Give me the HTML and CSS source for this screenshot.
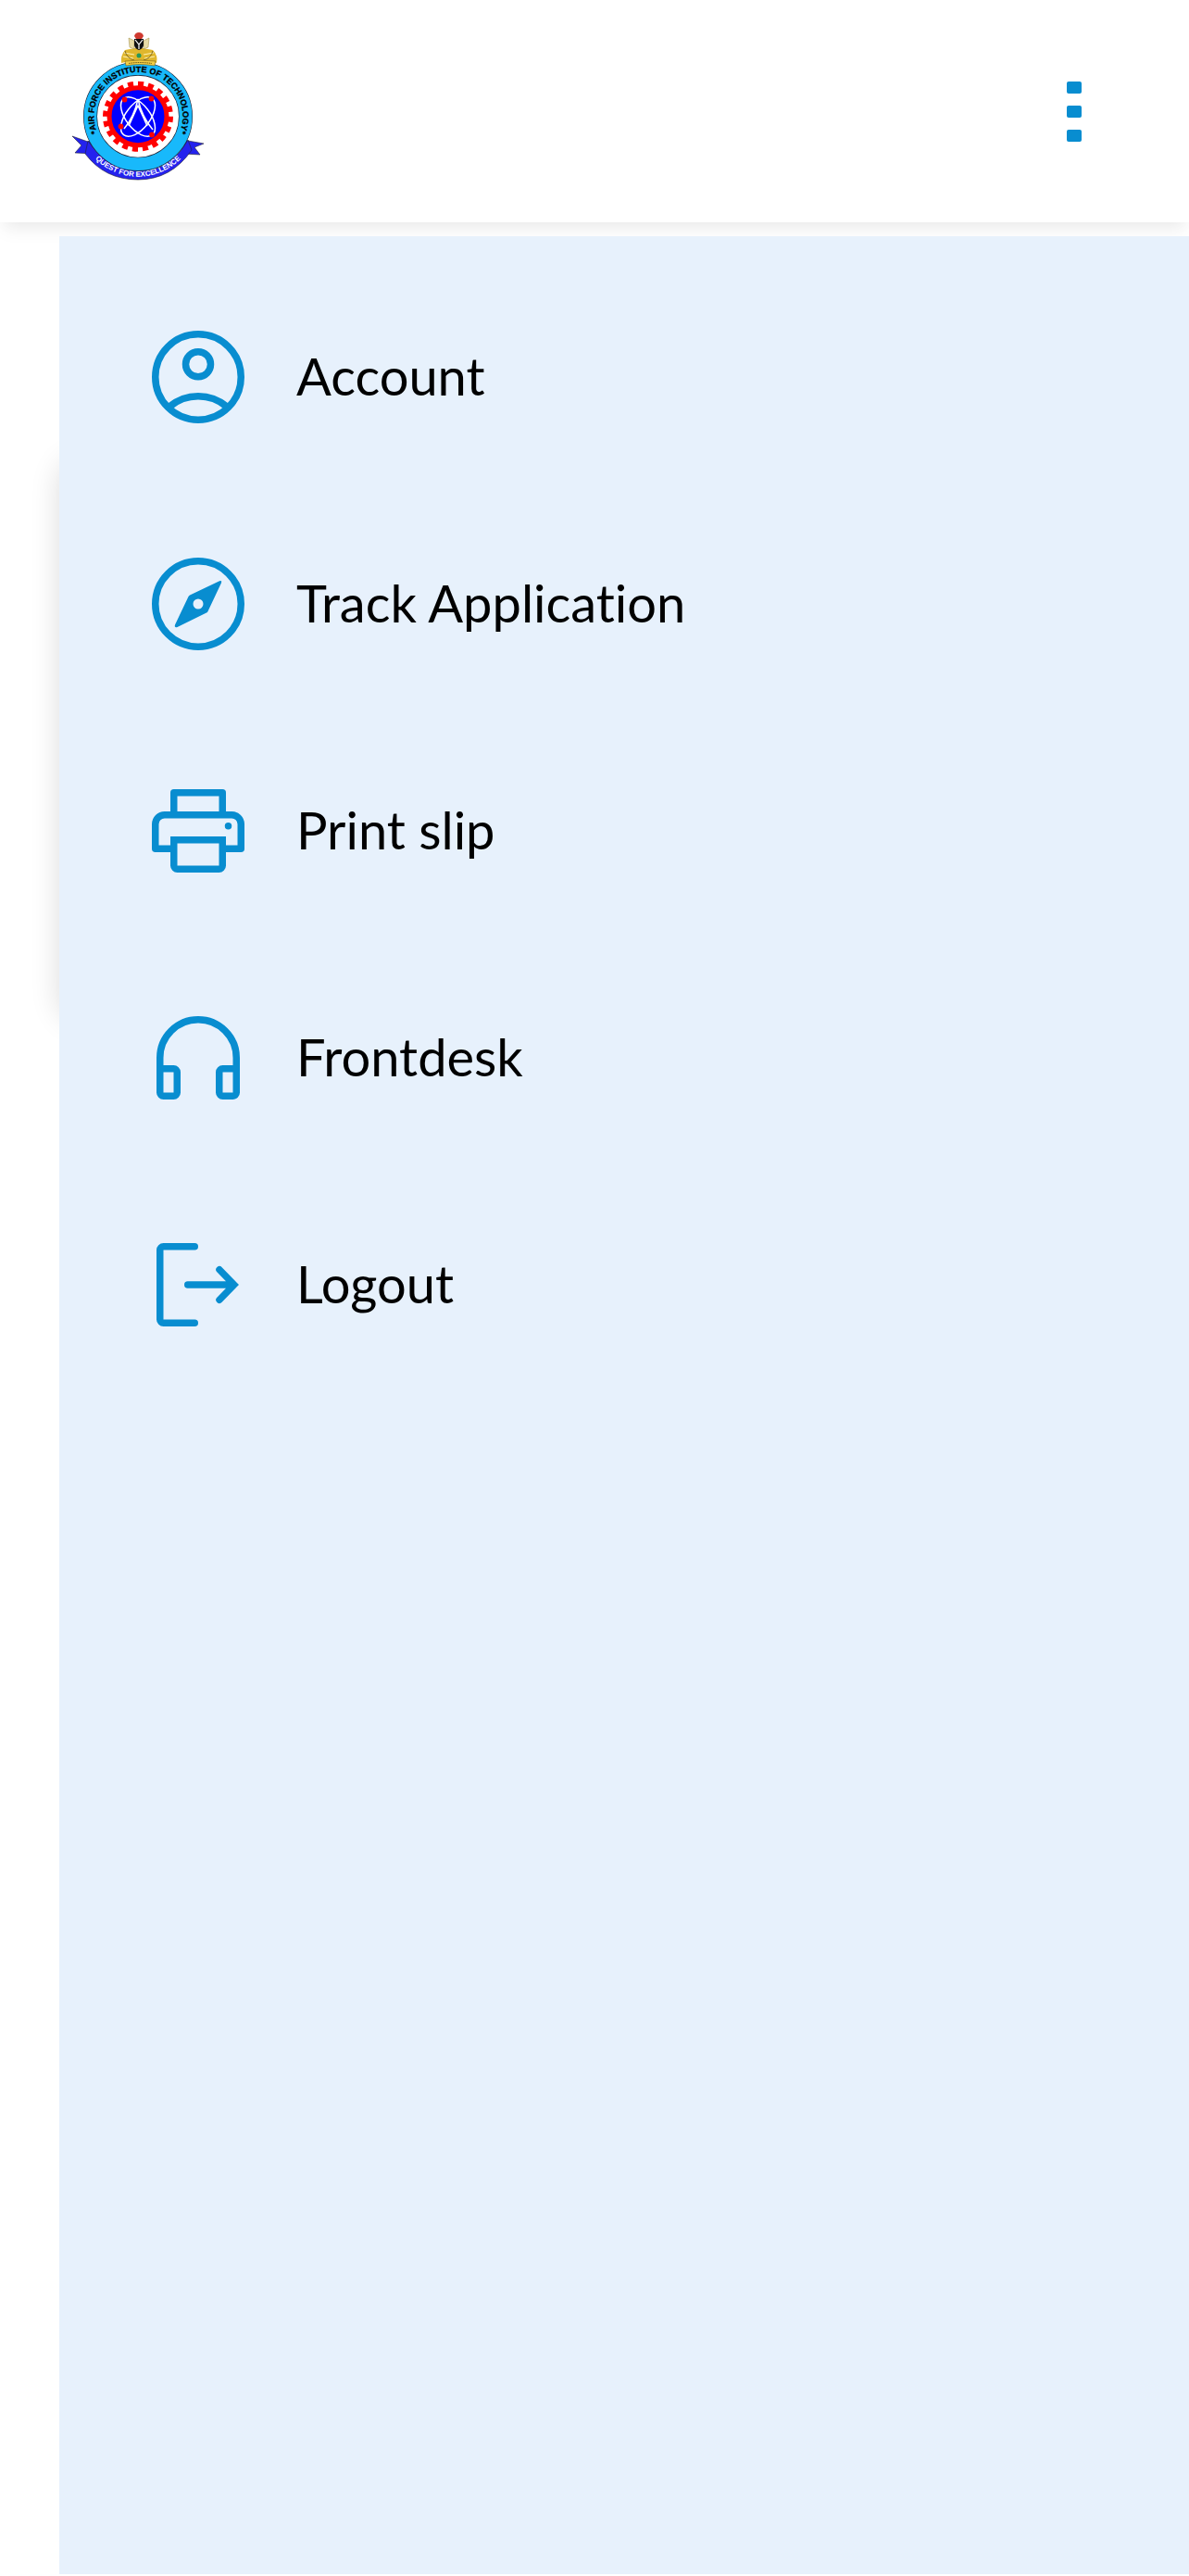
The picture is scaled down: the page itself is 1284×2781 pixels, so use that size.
FILE: index.html
```
<!DOCTYPE html>
<html lang="en">
<head>
  <meta charset="utf-8">
  <meta name="viewport" content="width=device-width, initial-scale=1">
  <title>Air Force Institute of Technology</title>
  <link rel="stylesheet" href="styles.css">
</head>
<body>
  <header class="topbar">
    <a class="brand" href="#" aria-label="Home">
      <svg class="crest" viewBox="0 0 160 180" aria-hidden="true">
        <defs>
          <path id="ring-path" d="M79 143.700a48 48 0 1 1 1 0"/>
          <path id="motto-path" d="M14 95.700a65 65 0 0 0 130 0"/>
        </defs>
        <path d="M8 117l17 6 15-3-8 16-21-1 7-8zM150 125l-17-3-13-2 9 16 17 1-6-8z" fill="#2422ee" stroke="#223" stroke-width=".6"/>
        <path d="M25 122Q45 152 79 154T133 121L137 132Q115 164 79 164T22 136z" fill="#2422ee" stroke="#223" stroke-width=".6"/>
        <circle cx="79" cy="95.700" r="51.500" fill="#fff" stroke="#223" stroke-width="15"/>
        <circle cx="79" cy="95.700" r="51.500" fill="none" stroke="#18b9fb" stroke-width="13.800"/>
        <circle cx="79" cy="95.700" r="35" fill="none" stroke="#f00" stroke-width="6" pathLength="200" stroke-dasharray="5.500 4.500"/>
        <circle cx="79" cy="95.700" r="31" fill="#00f" stroke="#f00" stroke-width="5"/>
        <g fill="none" stroke="#fff" stroke-width="1.500">
          <ellipse cx="79" cy="96" rx="13" ry="25" transform="rotate(38 79 96)"/>
          <ellipse cx="79" cy="96" rx="13" ry="25" transform="rotate(-38 79 96)"/>
          <path d="M64 109Q75 96 79 77Q83 96 95 110M69 106L79 84L89 106"/>
        </g>
        <g fill="#f00"><circle cx="64.500" cy="77.500" r="2.900"/><circle cx="93.500" cy="76.500" r="2.900"/><circle cx="60.500" cy="106.500" r="2.900"/><circle cx="94" cy="115.500" r="2.900"/></g>
        <text class="ring-text"><textPath href="#ring-path" startOffset="50%" text-anchor="middle">*AIR FORCE INSTITUTE OF TECHNOLOGY*</textPath></text>
        <text class="motto-text"><textPath href="#motto-path" startOffset="50%" text-anchor="middle">QUEST FOR EXCELLENCE</textPath></text>
        <g>
          <path d="M61 38Q60 30 65 24L76 22H84L95 24Q101 30 99 38L90 36H70z" fill="#e0b72d"/>
          <path d="M64 27l11 2M63 31l11 2M96 27l-11 2M97 31l-11 2" fill="none" stroke="#fff3b5" stroke-width="1"/>
          <path d="M65 25q2 8 10 10M95 25q-2 8-10 10" fill="none" stroke="#6b5618" stroke-width=".8"/>
          <path d="M69 11l6 3v9l-5-2zM91 11l-6 3v9l5-2z" fill="#e8dca8" stroke="#998338" stroke-width=".5"/>
          <path d="M75 12h10v7q-1 4-5 5q-4-1-5-5z" fill="#111"/>
          <path d="M76 13l4 5 4-5M80 18v5" fill="none" stroke="#fff" stroke-width="1.200"/>
          <path d="M75 9q1-4 5-4t5 4l-2 3h-6z" fill="#cf3930"/>
          <circle cx="80" cy="30" r="2.500" fill="#26975b"/>
          <path d="M65 36Q80 34 98 36L97 41Q80 38 66 41z" fill="#f3ce45" stroke="#604d15" stroke-width=".5"/>
          <path d="M69 38.500Q80 36.500 94 38.500" fill="none" stroke="#4b3b10" stroke-dasharray="1 .7"/>
        </g>
      </svg>
    </a>
    <button class="menu-toggle" type="button" aria-label="Menu" aria-expanded="true">
      <span class="dot"></span><span class="dot"></span><span class="dot"></span>
    </button>
  </header>

  <main class="page">
    <section class="card"></section>
    <nav class="drawer">
      <a class="item" href="#">
        <svg class="icon" viewBox="0 0 24 24" aria-hidden="true"><circle cx="12" cy="12" r="9.250"/><circle cx="12" cy="9.250" r="2.700"/><path d="M5.800 18.400c3.600-3 8.800-3 12.400 0"/></svg>
        <span>Account</span>
      </a>
      <a class="item" href="#">
        <svg class="icon" viewBox="0 0 24 24" aria-hidden="true"><circle cx="12" cy="12" r="9.250"/><path class="solid" fill-rule="evenodd" d="M16.600 7.050q.6-.2.400.4l-2.900 6.150q-.1.200-.3.300l-6.300 3.100q-.7.200-.5-.5l2.900-6.100q.1-.2.300-.3zM12 10.900a1.100 1.100 0 1 0 0 2.200a1.100 1.100 0 0 0 0-2.200z"/></svg>
        <span>Track Application</span>
      </a>
      <a class="item" href="#">
        <svg class="icon" viewBox="0 0 24 24" aria-hidden="true"><path stroke-linejoin="round" d="M6.750 8.500V3.750h10.500V8.500M6.750 15.850h-4v-5.300a2 2 0 0 1 2-2h14.500a2 2 0 0 1 2 2v5.300h-4"/><path d="M6.750 13.950h10.500v5.550a.75.750 0 0 1-.75.750h-9a.75.750 0 0 1-.75-.75z"/><circle class="solid" cx="18.500" cy="10.950" r=".75"/></svg>
        <span>Print slip</span>
      </a>
      <a class="item" href="#">
        <svg class="icon" viewBox="0 0 24 24" aria-hidden="true"><path d="M3.750 14.350V12a8.250 8.250 0 0 1 16.500 0v2.350M3.750 14.350H6.700a.75.750 0 0 1 .75.750v4.400a.75.750 0 0 1-.75.750H4.500a.75.750 0 0 1-.75-.75zM20.250 14.350H17.300a.75.750 0 0 0-.75.750v4.400a.75.750 0 0 0 .75.750h2.200a.75.750 0 0 0 .75-.75z"/></svg>
        <span>Frontdesk</span>
      </a>
      <a class="item" href="#">
        <svg class="icon icon-round" viewBox="0 0 24 24" aria-hidden="true"><path d="M11.250 3.750H4.500a.75.750 0 0 0-.75.750v15a.75.750 0 0 0 .75.750h6.750M9.750 12h9.500M16.600 8.750L19.750 12l-3.150 3.250"/></svg>
        <span>Logout</span>
      </a>
    </nav>
  </main>
</body>
</html>
```
FILE: styles.css
```
* {
  box-sizing: border-box;
}

body {
  display: flex;
  flex-direction: column;
  min-height: 100vh;
  margin: 0;
  background: #fff;
  color: #000;
  font-family: Lato, "Open Sans", sans-serif;
}

.topbar {
  position: relative;
  display: flex;
  align-items: center;
  justify-content: space-between;
  height: 240px;
  padding: 0 100px 0 70px;
  background: #fff;
  box-shadow: 0 12px 18px -3px rgba(0, 0, 0, 0.05), 0 6px 18px -6px rgba(0, 0, 0, 0.05);
}

.crest {
  display: block;
  width: 160px;
  height: 180px;
}

.ring-text {
  font: bold 9px "Liberation Sans", sans-serif;
  stroke: #000;
  stroke-width: 0.3;
}

.motto-text {
  fill: #fff;
  font: bold 8px "Liberation Sans", sans-serif;
}

.menu-toggle {
  display: flex;
  flex-direction: column;
  align-items: center;
  gap: 13px;
  width: 48px;
  padding: 0;
  border: 0;
  background: none;
}

.dot {
  width: 16px;
  height: 13px;
  border-radius: 2px;
  background: #088dd0;
}

.page {
  position: relative;
  flex: 1;
  padding: 256px 64px 0;
}

.card {
  min-height: 606px;
  border-radius: 24px;
  background: #fff;
  box-shadow: 0 0 32px rgba(0, 0, 0, 0.14);
}

.drawer {
  position: absolute;
  inset: 15px 0 2px 64px;
  display: flex;
  flex-direction: column;
  gap: 125px;
  padding: 92px 90px;
  background: #e7f1fc;
}

.item {
  display: flex;
  align-items: center;
  gap: 46px;
  color: inherit;
  font-size: 56px;
  font-variant-ligatures: none;
  line-height: 72px;
  text-decoration: none;
}

.item span {
  padding-bottom: 2px;
}

.icon {
  flex: none;
  width: 120px;
  height: 120px;
  fill: none;
  stroke: #088dd0;
  stroke-width: 1.5;
}

.icon-round {
  stroke-linecap: round;
}

.icon .solid {
  fill: #088dd0;
  stroke: none;
}
```
